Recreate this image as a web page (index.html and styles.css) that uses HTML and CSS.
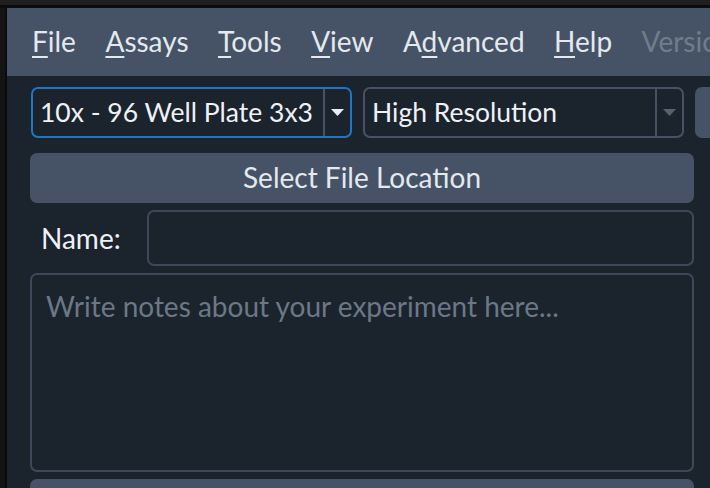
FILE: index.html
```html
<!DOCTYPE html>
<html>
<head>
<meta charset="utf-8">
<link rel="stylesheet" href="styles.css">
</head>
<body>
<div class="topstrip"></div>
<div class="main">
  <div class="leftstrip"></div>
  <div class="window">
    <nav class="menubar">
      <span class="menu"><u>F</u>ile</span>
      <span class="menu"><u>A</u>ssays</span>
      <span class="menu"><u>T</u>ools</span>
      <span class="menu"><u>V</u>iew</span>
      <span class="menu">A<u>d</u>vanced</span>
      <span class="menu"><u>H</u>elp</span>
      <span class="menu disabled">Version</span>
    </nav>
    <div class="content">
      <div class="combos">
        <div class="combo active">
          <span class="combo-text">10x - 96 Well Plate 3x3</span>
          <span class="combo-btn"><svg width="13" height="7" viewBox="0 0 13 7"><path d="M0 0H13L6.5 7Z" fill="#e8edf2"/></svg></span>
        </div>
        <div class="combo">
          <span class="combo-text">High Resolution</span>
          <span class="combo-btn"><svg width="13" height="7" viewBox="0 0 13 7"><path d="M0 0H13L6.5 7Z" fill="#56626f"/></svg></span>
        </div>
        <div class="ghost"></div>
      </div>
      <button class="wide">Select File Location</button>
      <div class="name-row">
        <label class="label">Name:</label>
        <div class="input"></div>
      </div>
      <div class="notes">Write notes about your experiment here...</div>
      <button class="wide bottom"></button>
    </div>
  </div>
</div>
</body>
</html>
```

FILE: styles.css
```css
html, body {
  margin: 0;
  padding: 0;
  width: 710px;
  height: 488px;
  overflow: hidden;
  background: #131313;
  font-family: "Lato", "Noto Sans", sans-serif;
}
.topstrip {
  height: 5px;
  background: #1f1f1f;
  border-bottom: 3px solid #0b0b0b;
}
.main {
  display: flex;
  height: 480px;
}
.leftstrip {
  width: 5px;
  flex-shrink: 0;
  border-right: 2px solid #0b0b0b;
  background: #141414;
}
.window {
  flex: 1;
  background: #1b232d;
  overflow: hidden;
}
.menubar {
  height: 68px;
  background: #465366;
  display: flex;
  align-items: center;
  padding-left: 25px;
  gap: 29.5px;
  font-size: 28px;
  color: #e3e9ef;
  white-space: nowrap;
  overflow: hidden;
}
.menu {
  flex-shrink: 0;
  margin-top: -3px;
}
.menu u {
  text-decoration-thickness: 2px;
  text-underline-offset: 4px;
}
.menu.disabled {
  color: #6f7d8c;
}
.content {
  padding: 11px 0 0 23px;
  width: 664px;
  display: flex;
  flex-direction: column;
}
.combos {
  display: flex;
  gap: 11px;
  margin-left: 1px;
  margin-bottom: 15px;
}
.combo {
  flex-shrink: 0;
  width: 321px;
  height: 51px;
  box-sizing: border-box;
  border: 2px solid #465366;
  border-radius: 7px;
  display: flex;
  align-items: center;
  color: #eef2f6;
  font-size: 26.5px;
}
.combo.active {
  border-color: #1f76c4;
}
.combo-text {
  flex: 1;
  padding-left: 7px;
  margin-top: -2px;
}
.combo-btn {
  width: 25px;
  align-self: stretch;
  border-left: 2px solid #465366;
  display: flex;
  align-items: center;
  justify-content: center;
}
.ghost {
  flex-shrink: 0;
  width: 321px;
  height: 51px;
  background: #465366;
  border-radius: 7px;
}
.wide {
  display: block;
  width: 664px;
  height: 50px;
  border: none;
  border-radius: 7px;
  background: #465366;
  color: #e3e9ef;
  font-family: inherit;
  font-size: 28px;
  padding: 0 0 2px 0;
}
.name-row {
  display: flex;
  align-items: center;
  margin-top: 7px;
}
.label {
  width: 117px;
  padding-left: 11px;
  box-sizing: border-box;
  color: #eef2f6;
  font-size: 28px;
}
.input {
  flex: 1;
  height: 56px;
  box-sizing: border-box;
  border: 2px solid #3d4959;
  border-radius: 7px;
}
.notes {
  margin-top: 7px;
  height: 199px;
  box-sizing: border-box;
  border: 2px solid #3d4959;
  border-radius: 7px;
  padding: 14px 0 0 14px;
  color: #6b7887;
  font-size: 28px;
}
.bottom {
  margin-top: 7px;
}
```
